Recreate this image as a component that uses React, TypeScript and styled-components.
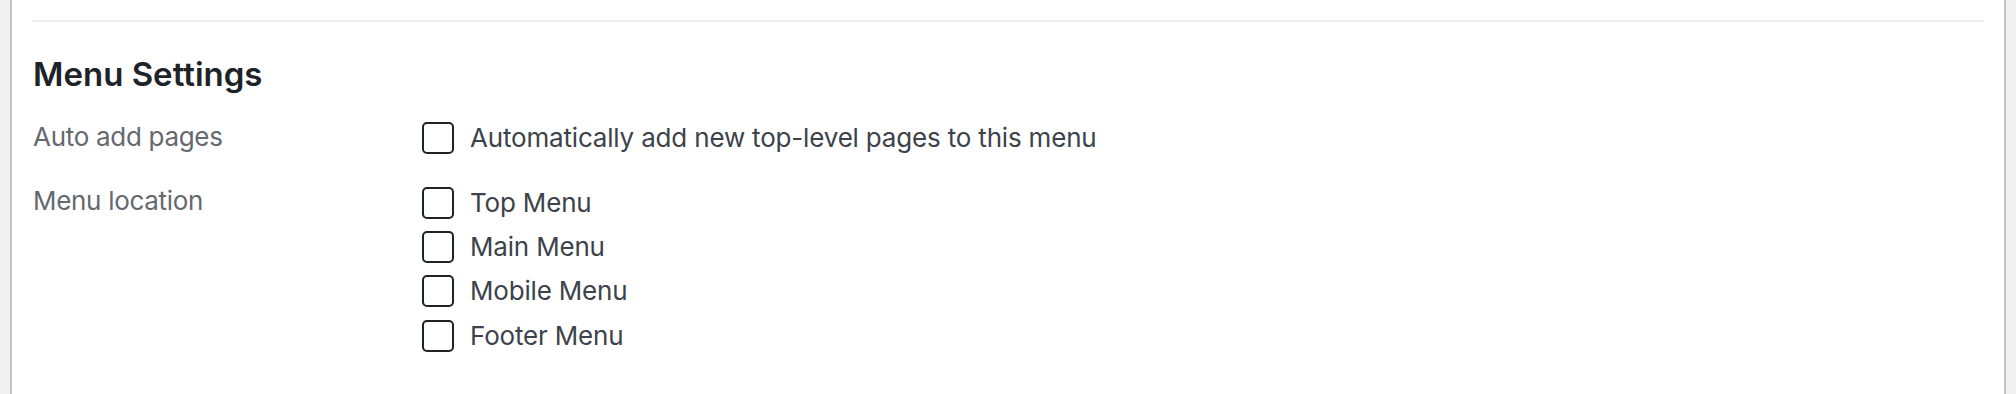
import React from "react";
import styled, { createGlobalStyle } from "styled-components";

const GlobalStyle = createGlobalStyle`
  html, body {
    margin: 0;
    padding: 0;
    background: #f0f0f1;
  }
  body {
    font-family: Inter, "Noto Sans", "Liberation Sans", sans-serif;
    -webkit-font-smoothing: antialiased;
  }
`;

const Screen = styled.div`
  display: flex;
  min-height: 394px;
  padding: 0 10px;
`;

const Panel = styled.div`
  flex: 1;
  background: #ffffff;
  border-left: 2px solid #c3c4c7;
  border-right: 2px solid #c3c4c7;
  padding: 20px 20px 0;
`;

const Section = styled.section`
  border-top: 2px solid #f0f0f1;
`;

const Heading = styled.h3`
  margin: 29px 0 19px;
  padding-left: 1px;
  font-size: 33px;
  line-height: 46px;
  font-weight: 600;
  color: #1d2327;
`;

const SettingRow = styled.div`
  display: grid;
  grid-template-columns: 390px 1fr;
  margin-bottom: 20px;
`;

const Label = styled.div`
  padding-left: 1px;
  font-size: 26px;
  line-height: 42px;
  letter-spacing: -0.3px;
  color: #646970;
`;

const Options = styled.div`
  display: flex;
  flex-direction: column;
`;

const Option = styled.label`
  display: flex;
  align-items: center;
  height: 44.4px;
  font-size: 26px;
  line-height: 44px;
  letter-spacing: -0.18px;
  color: #3c434a;
`;

const Box = styled.span`
  box-sizing: border-box;
  width: 32px;
  height: 32px;
  margin-right: 16px;
  border: 2px solid #1d2327;
  border-radius: 5px;
  background: #ffffff;
  flex-shrink: 0;
`;

const locations = ["Top Menu", "Main Menu", "Mobile Menu", "Footer Menu"];

export default function App() {
  return (
    <>
      <GlobalStyle />
      <Screen>
        <Panel>
          <Section>
            <Heading>Menu Settings</Heading>
            <SettingRow>
              <Label>Auto add pages</Label>
              <Options>
                <Option>
                  <Box />
                  Automatically add new top-level pages to this menu
                </Option>
              </Options>
            </SettingRow>
            <SettingRow>
              <Label>Menu location</Label>
              <Options>
                {locations.map((name) => (
                  <Option key={name}>
                    <Box />
                    {name}
                  </Option>
                ))}
              </Options>
            </SettingRow>
          </Section>
        </Panel>
      </Screen>
    </>
  );
}
